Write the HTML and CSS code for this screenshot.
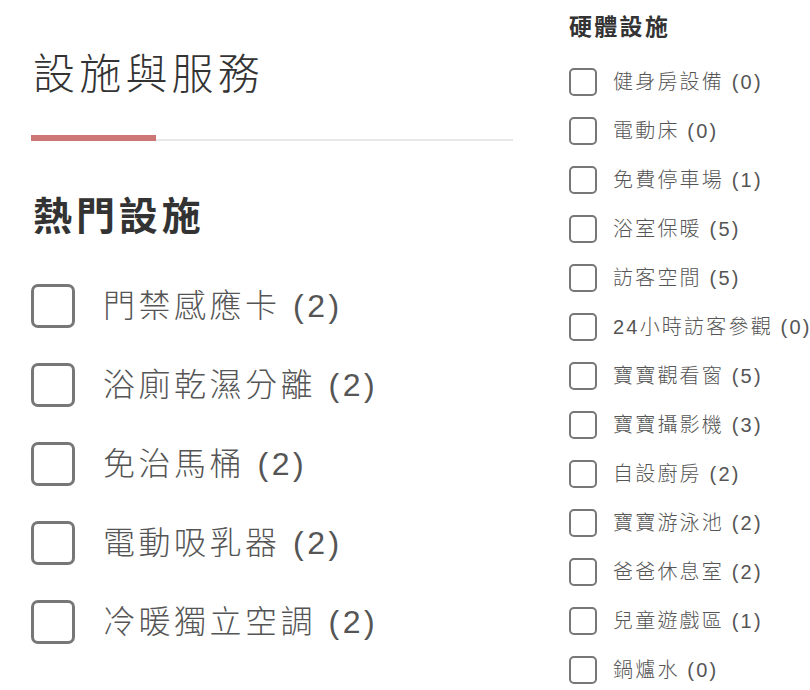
FILE: index.html
```html
<!DOCTYPE html>
<html lang="zh-Hant">
<head>
  <meta charset="UTF-8"/>
  <title>設施與服務</title>
  <meta name="viewport" content="width=device-width,initial-scale=1"/>
  <link rel="stylesheet" href="styles.css">
</head>
<body>
  <div class="page">
    <section class="main">
      <h1 class="title">設施與服務</h1>
      <div class="divider"><span class="accent"></span><span class="rule"></span></div>

      <h2 class="heading">熱門設施</h2>
      <ul class="checks big">
        <li><span class="box"></span>門禁感應卡 (2)</li>
        <li><span class="box"></span>浴廁乾濕分離 (2)</li>
        <li><span class="box"></span>免治馬桶 (2)</li>
        <li><span class="box"></span>電動吸乳器 (2)</li>
        <li><span class="box"></span>冷暖獨立空調 (2)</li>
      </ul>
    </section>

    <aside class="side">
      <h3 class="subheading">硬體設施</h3>
      <ul class="checks small">
        <li><span class="box"></span>健身房設備 (0)</li>
        <li><span class="box"></span>電動床 (0)</li>
        <li><span class="box"></span>免費停車場 (1)</li>
        <li><span class="box"></span>浴室保暖 (5)</li>
        <li><span class="box"></span>訪客空間 (5)</li>
        <li><span class="box"></span>24小時訪客參觀 (0)</li>
        <li><span class="box"></span>寶寶觀看窗 (5)</li>
        <li><span class="box"></span>寶寶攝影機 (3)</li>
        <li><span class="box"></span>自設廚房 (2)</li>
        <li><span class="box"></span>寶寶游泳池 (2)</li>
        <li><span class="box"></span>爸爸休息室 (2)</li>
        <li><span class="box"></span>兒童遊戲區 (1)</li>
        <li><span class="box"></span>鍋爐水 (0)</li>
      </ul>
    </aside>
  </div>
</body>
</html>
```

FILE: styles.css
```css
html,body{margin:0;padding:0;background:#fff;overflow:hidden;}
body{font-family:"Liberation Sans","Noto Sans CJK TC",sans-serif;color:#333;}
.page{display:flex;gap:56px;padding-left:31px;width:max-content;white-space:nowrap;}
.main{width:482px;}
.title{font-size:42px;font-weight:300;letter-spacing:.1em;line-height:50px;margin:46px 0 0 2px;color:#333;font-family:"Noto Sans CJK TC",sans-serif;}
.divider{display:flex;align-items:flex-end;margin-top:39px;}
.accent{width:125px;height:6px;background:#cd7676;}
.rule{flex:1;height:2px;background:#e8e8e8;}
.heading{font-size:39px;font-weight:700;letter-spacing:.1em;line-height:48px;margin:52px 0 0 2px;color:#333;}
.checks{list-style:none;margin:0;padding:0;display:flex;flex-direction:column;color:#555;font-weight:300;}
.checks li{display:flex;align-items:center;}
.box{box-sizing:border-box;flex:none;background:#fff;}
.big{margin-top:43px;gap:35px;}
.big li{font-size:32px;letter-spacing:.11em;height:44px;line-height:44px;}
.big .box{width:44px;height:44px;border:3px solid #777;border-radius:7px;margin-right:28px;}
.side{padding-top:12px;}
.subheading{font-size:23px;font-weight:700;letter-spacing:.1em;line-height:30px;margin:0;color:#333;}
.small{margin-top:26px;gap:21px;}
.small li{font-size:20px;letter-spacing:.11em;height:28px;line-height:28px;}
.small .box{width:28px;height:28px;border:2px solid #777;border-radius:5px;margin-right:16px;}
```
